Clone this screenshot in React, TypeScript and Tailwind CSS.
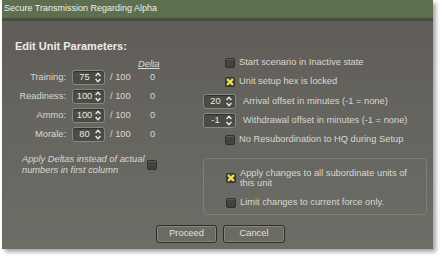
const font = { fontFamily: '"Liberation Sans", Arial, sans-serif' }

function Arrows() {
  return (
    <svg width="6" height="11" viewBox="0 0 6 11" className="shrink-0">
      <path d="M0.6 4 L3 1.4 L5.4 4" fill="none" stroke="#ecece4" strokeWidth="1.4" />
      <path d="M0.6 7 L3 9.6 L5.4 7" fill="none" stroke="#ecece4" strokeWidth="1.4" />
    </svg>
  )
}

function Spin({ value }: { value: string }) {
  return (
    <div className="flex h-[15px] w-[33px] shrink-0 items-center rounded-[3px] border border-[#878980] bg-[#4a4d46] pr-[3px] text-[#e6e6de] shadow-[inset_0_1px_1px_rgba(0,0,0,0.4)]">
      <span className="flex-1 pl-[1px] text-center leading-none">{value}</span>
      <Arrows />
    </div>
  )
}

function Check({ checked = false }: { checked?: boolean }) {
  return (
    <div className="flex h-[10px] w-[10px] shrink-0 items-center justify-center rounded-[2px] border border-[#2f312d] bg-[#40443d] shadow-[inset_0_1px_0_rgba(255,255,255,0.15)]">
      {checked && (
        <svg width="8" height="8" viewBox="0 0 8 8">
          <path d="M1.7 1.7 L6.3 6.3 M6.3 1.7 L1.7 6.3" stroke="#efe04e" strokeWidth="2.3" strokeLinecap="round" />
        </svg>
      )}
    </div>
  )
}

function Row({ label, value }: { label: string; value: string }) {
  return (
    <div className="flex h-[15px] items-center">
      <span className="w-[57px] pr-[6px] text-right">{label}</span>
      <Spin value={value} />
      <span className="ml-[5px] w-[40px]">/ 100</span>
      <span>0</span>
    </div>
  )
}

export default function App() {
  return (
    <div className="h-[259px] w-[443px] bg-white" style={font}>
      <div className="ml-[2px] flex h-[249px] w-[431px] flex-col shadow-[3px_3px_4px_rgba(0,0,0,0.35)]">
        <div className="flex h-[18px] items-center bg-[#5e6f4f] pl-[2px] text-[9px] text-[#eef0ea]">
          Secure Transmission Regarding Alpha
        </div>
        <div className="h-[3px] bg-[#4a4a46]" />
        <div className="flex flex-1 flex-col bg-gradient-to-b from-[#615d59] to-[#6b6e66] text-[9.3px] text-[#d8d8d0]">
          <div className="flex">
            <div className="flex w-[200px] flex-col pl-[13px]">
              <div className="mt-[19px] text-[11px] font-bold leading-[13px] text-[#ececE4]">Edit Unit Parameters:</div>
              <div className="mt-[6px] h-[10px] pl-[123px] italic leading-[10px] underline">Delta</div>
              <div className="mt-[1px] flex flex-col gap-[4px]">
                <Row label="Training:" value="75" />
                <Row label="Readiness:" value="100" />
                <Row label="Ammo:" value="100" />
                <Row label="Morale:" value="80" />
              </div>
              <div className="mt-[12px] flex items-center">
                <div className="w-[132px] pl-[7px] italic leading-[11px]">
                  Apply Deltas instead of actual
                  <br />
                  numbers in first column
                </div>
                <Check />
              </div>
            </div>
            <div className="flex flex-1 flex-col">
              <div className="mt-[36px] flex h-[12px] items-center gap-[4px] pl-[23px]">
                <Check />
                <span>Start scenario in Inactive state</span>
              </div>
              <div className="mt-[7px] flex h-[12px] items-center gap-[4px] pl-[23px]">
                <Check checked />
                <span>Unit setup hex is locked</span>
              </div>
              <div className="mt-[6px] flex items-center gap-[7px] pl-[1px]">
                <Spin value="20" />
                <span>Arrival offset in minutes (-1 = none)</span>
              </div>
              <div className="mt-[4px] flex items-center gap-[7px] pl-[1px]">
                <Spin value="-1" />
                <span>Withdrawal offset in minutes (-1 = none)</span>
              </div>
              <div className="mt-[6px] flex h-[12px] items-center gap-[4px] pl-[23px]">
                <Check />
                <span>No Resubordination to HQ during Setup</span>
              </div>
              <div className="ml-[1px] mt-[12px] flex h-[57px] w-[224px] flex-col rounded-[4px] border border-[#7d7f77] pl-[22px] pt-[9px]">
                <div className="flex items-center gap-[4px]">
                  <Check checked />
                  <span className="leading-[10px]">
                    Apply changes to all subordinate units of
                    <br />
                    this unit
                  </span>
                </div>
                <div className="mt-[9px] flex h-[12px] items-center gap-[4px]">
                  <Check />
                  <span>Limit changes to current force only.</span>
                </div>
              </div>
            </div>
          </div>
          <div className="mt-[10px] flex justify-center gap-[6px] pl-[6px]">
            <div className="flex h-[18px] w-[61px] items-center justify-center rounded-[3px] border border-[#2c2d29] bg-[#6a6c64] text-[#e0e0d8] shadow-[inset_0_0_0_1px_rgba(255,255,255,0.18)]">
              Proceed
            </div>
            <div className="flex h-[18px] w-[62px] items-center justify-center rounded-[3px] border border-[#2c2d29] bg-[#6a6c64] text-[#e0e0d8] shadow-[inset_0_0_0_1px_rgba(255,255,255,0.18)]">
              Cancel
            </div>
          </div>
        </div>
      </div>
    </div>
  )
}
